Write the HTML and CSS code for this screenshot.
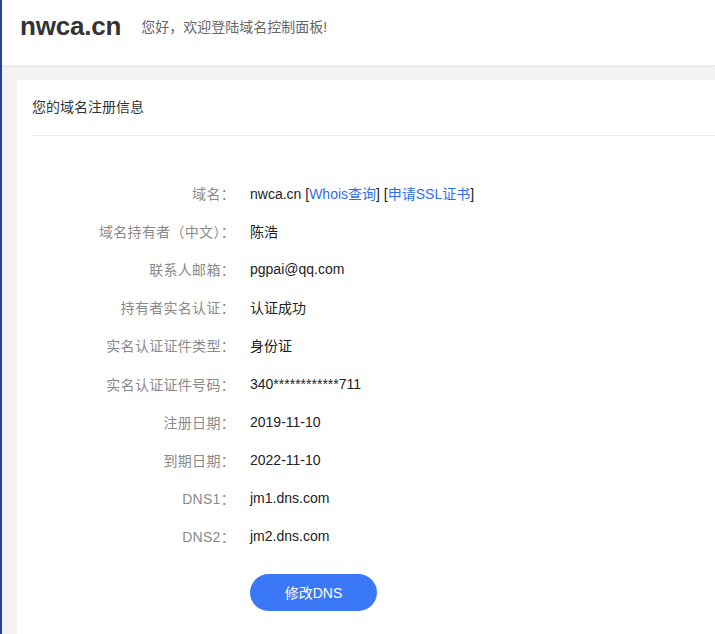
FILE: index.html
```html
<!DOCTYPE html>
<html lang="zh-CN">
<head>
<meta charset="utf-8">
<title>nwca.cn</title>
<link rel="stylesheet" href="styles.css">
</head>
<body>
<div class="page">
  <header class="topbar">
    <div class="brand">nwca.cn</div>
    <div class="greeting">您好，欢迎登陆域名控制面板!</div>
  </header>
  <main class="main">
    <section class="card">
      <div class="card-title">您的域名注册信息</div>
      <div class="info">
        <div class="label">域名：</div>
        <div class="value">nwca.cn [<a class="link">Whois查询</a>] [<a class="link">申请SSL证书</a>]</div>
        <div class="label">域名持有者（中文）：</div>
        <div class="value">陈浩</div>
        <div class="label">联系人邮箱：</div>
        <div class="value">pgpai@qq.com</div>
        <div class="label">持有者实名认证：</div>
        <div class="value">认证成功</div>
        <div class="label">实名认证证件类型：</div>
        <div class="value">身份证</div>
        <div class="label">实名认证证件号码：</div>
        <div class="value">340************711</div>
        <div class="label">注册日期：</div>
        <div class="value">2019-11-10</div>
        <div class="label">到期日期：</div>
        <div class="value">2022-11-10</div>
        <div class="label">DNS1：</div>
        <div class="value">jm1.dns.com</div>
        <div class="label">DNS2：</div>
        <div class="value">jm2.dns.com</div>
        <div></div>
        <div class="actions"><button class="btn">修改DNS</button></div>
      </div>
    </section>
  </main>
</div>
</body>
</html>
```
FILE: styles.css
```css
* { box-sizing: border-box; }
html, body { margin: 0; padding: 0; height: 100%; }
body {
  font-family: "Liberation Sans", "Noto Sans CJK SC", sans-serif;
  font-size: 14px;
  color: #333;
  background: #f3f3f3;
  overflow: hidden;
}
.page {
  min-height: 100%;
  border-left: 2px solid #2343a6;
  background: #f3f3f3;
}
.topbar {
  height: 66px;
  background: #fff;
  display: flex;
  align-items: center;
  padding-left: 18px;
  box-shadow: 0 1px 2px rgba(0,0,0,0.06);
  border-bottom: 1px solid #ececec;
}
.brand {
  font-size: 26px;
  font-weight: bold;
  color: #333;
  letter-spacing: -0.2px;
  margin-top: -12px;
}
.greeting {
  margin-left: 20px;
  color: #666;
  font-size: 14px;
  margin-top: -14px;
}
.main {
  padding: 14px 0 0 15px;
}
.card {
  background: #fff;
  padding-left: 15px;
  min-height: 560px;
}
.card-title {
  font-size: 14px;
  line-height: 20px;
  padding: 17px 0 18px;
  color: #333;
  border-bottom: 1px solid #e9ecf1;
}
.info {
  display: grid;
  grid-template-columns: 203px 1fr;
  column-gap: 15px;
  grid-auto-rows: 38.1px;
  align-items: center;
  padding-top: 38px;
}
.label {
  text-align: right;
  color: #8a8a8a;
  letter-spacing: 0.3px;
}
.value { color: #222; }
.link { color: #2f6df0; text-decoration: none; }
.actions { align-self: start; padding-top: 19px; }
.btn {
  width: 127px;
  height: 37px;
  border: none;
  border-radius: 19px;
  background: #3a78f6;
  color: #fff;
  font-family: "Liberation Sans", "Noto Sans CJK SC", sans-serif;
  font-size: 14px;
  padding: 0;
}
```
